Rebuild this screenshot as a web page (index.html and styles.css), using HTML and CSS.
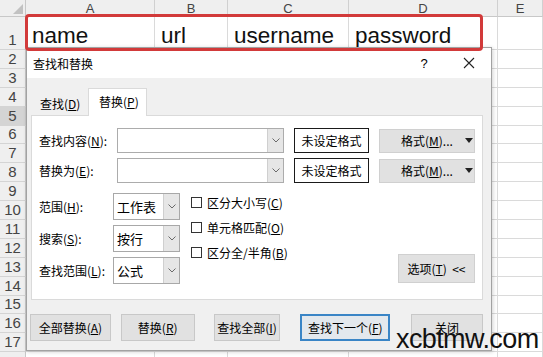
FILE: index.html
```html
<!DOCTYPE html>
<html>
<head>
<meta charset="utf-8">
<title>查找和替换</title>
<link rel="stylesheet" href="styles.css">
</head>
<body>
<div class="sheet">
  <div class="corner"><span class="tri"></span></div>
  <div class="ch">A</div><div class="ch">B</div><div class="ch">C</div><div class="ch">D</div><div class="ch">E</div>

  <div class="rh">1</div><div class="c big">name</div><div class="c big">url</div><div class="c big">username</div><div class="c big">password</div><div class="c"></div>
  <div class="rh">2</div><div class="c"></div><div class="c"></div><div class="c"></div><div class="c"></div><div class="c"></div>
  <div class="rh">3</div><div class="c"></div><div class="c"></div><div class="c"></div><div class="c"></div><div class="c"></div>
  <div class="rh">4</div><div class="c"></div><div class="c"></div><div class="c"></div><div class="c"></div><div class="c"></div>
  <div class="rh active">5</div><div class="c"></div><div class="c"></div><div class="c"></div><div class="c"></div><div class="c"></div>
  <div class="rh">6</div><div class="c"></div><div class="c"></div><div class="c"></div><div class="c"></div><div class="c"></div>
  <div class="rh">7</div><div class="c"></div><div class="c"></div><div class="c"></div><div class="c"></div><div class="c"></div>
  <div class="rh">8</div><div class="c"></div><div class="c"></div><div class="c"></div><div class="c"></div><div class="c"></div>
  <div class="rh">9</div><div class="c"></div><div class="c"></div><div class="c"></div><div class="c"></div><div class="c"></div>
  <div class="rh">10</div><div class="c"></div><div class="c"></div><div class="c"></div><div class="c"></div><div class="c"></div>
  <div class="rh">11</div><div class="c"></div><div class="c"></div><div class="c"></div><div class="c"></div><div class="c"></div>
  <div class="rh">12</div><div class="c"></div><div class="c"></div><div class="c"></div><div class="c"></div><div class="c"></div>
  <div class="rh">13</div><div class="c"></div><div class="c"></div><div class="c"></div><div class="c"></div><div class="c"></div>
  <div class="rh">14</div><div class="c"></div><div class="c"></div><div class="c"></div><div class="c"></div><div class="c"></div>
  <div class="rh">15</div><div class="c"></div><div class="c"></div><div class="c"></div><div class="c"></div><div class="c"></div>
  <div class="rh">16</div><div class="c"></div><div class="c"></div><div class="c"></div><div class="c"></div><div class="c"></div>
  <div class="rh">17</div><div class="c"></div><div class="c"></div><div class="c"></div><div class="c"></div><div class="c"></div>
  <div class="rh"></div><div class="c"></div><div class="c"></div><div class="c"></div><div class="c"></div><div class="c"></div>
</div>

<div class="highlight"></div>

<div class="dialog">
  <div class="titlebar">
    <span class="title">查找和替换</span>
    <span class="help">?</span>
    <span class="close"><svg width="12" height="12" viewBox="0 0 12 12"><path d="M1 1 L11 11 M11 1 L1 11" stroke="#222" stroke-width="1.1" fill="none"/></svg></span>
  </div>
  <div class="dbody">
    <div class="tabs">
      <div class="tab">查找(<u>D</u>)</div>
      <div class="tab current">替换(<u>P</u>)</div>
    </div>
    <div class="panel">
      <div class="frow">
        <span class="flabel">查找内容(<u>N</u>):</span>
        <div class="combo"><span class="combo-field"></span><span class="dd"><svg width="8" height="5" viewBox="0 0 8 5"><path d="M0.5 0.5 L4 4 L7.5 0.5" fill="none" stroke="#6a6a6a"/></svg></span></div>
        <div class="fmtbox">未设定格式</div>
        <div class="fmtbtn"><span>格式(<u>M</u>)...</span><svg class="caret" width="8" height="5" viewBox="0 0 8 5"><path d="M0 0 H8 L4 5 Z" fill="#222"/></svg></div>
      </div>
      <div class="frow">
        <span class="flabel">替换为(<u>E</u>):</span>
        <div class="combo"><span class="combo-field"></span><span class="dd"><svg width="8" height="5" viewBox="0 0 8 5"><path d="M0.5 0.5 L4 4 L7.5 0.5" fill="none" stroke="#6a6a6a"/></svg></span></div>
        <div class="fmtbox">未设定格式</div>
        <div class="fmtbtn"><span>格式(<u>M</u>)...</span><svg class="caret" width="8" height="5" viewBox="0 0 8 5"><path d="M0 0 H8 L4 5 Z" fill="#222"/></svg></div>
      </div>
      <div class="opts">
        <div class="selcol">
          <div class="srow">
            <span class="slabel">范围(<u>H</u>):</span>
            <div class="sel"><span class="sel-val">工作表</span><span class="dd"><svg width="8" height="5" viewBox="0 0 8 5"><path d="M0.5 0.5 L4 4 L7.5 0.5" fill="none" stroke="#6a6a6a"/></svg></span></div>
          </div>
          <div class="srow">
            <span class="slabel">搜索(<u>S</u>):</span>
            <div class="sel"><span class="sel-val">按行</span><span class="dd"><svg width="8" height="5" viewBox="0 0 8 5"><path d="M0.5 0.5 L4 4 L7.5 0.5" fill="none" stroke="#6a6a6a"/></svg></span></div>
          </div>
          <div class="srow">
            <span class="slabel">查找范围(<u>L</u>):</span>
            <div class="sel"><span class="sel-val">公式</span><span class="dd"><svg width="8" height="5" viewBox="0 0 8 5"><path d="M0.5 0.5 L4 4 L7.5 0.5" fill="none" stroke="#6a6a6a"/></svg></span></div>
          </div>
        </div>
        <div class="checks">
          <div class="chk"><span class="box"></span>区分大小写(<u>C</u>)</div>
          <div class="chk"><span class="box"></span>单元格匹配(<u>O</u>)</div>
          <div class="chk"><span class="box"></span>区分全/半角(<u>B</u>)</div>
        </div>
        <div class="optbtn">选项(<u>T</u>)&nbsp;&nbsp;&lt;&lt;</div>
      </div>
    </div>
    <div class="btnrow">
      <div class="btn b1">全部替换(<u>A</u>)</div>
      <div class="btn b2">替换(<u>R</u>)</div>
      <div class="btn b3">查找全部(<u>I</u>)</div>
      <div class="btn b4 primary">查找下一个(<u>F</u>)</div>
      <div class="btn b5">关闭</div>
    </div>
  </div>
</div>

<div class="watermark">xcbtmw.com</div>
</body>
</html>
```

FILE: styles.css
```css
* { box-sizing: border-box; }
html, body { margin: 0; padding: 0; }
body {
  width: 543px;
  height: 357px;
  overflow: hidden;
  position: relative;
  background: #fff;
  font-family: "Liberation Sans", Arial, sans-serif;
}

/* spreadsheet */
.sheet {
  display: grid;
  grid-template-columns: 26px 129px 73px 121px 149px 45px;
  grid-template-rows: 17px 33px repeat(17, 18.9px);
}
.corner {
  background: #efefef;
  border-right: 1px solid #c8c8c8;
  border-bottom: 1px solid #c8c8c8;
  display: flex;
  align-items: flex-end;
  justify-content: flex-end;
  padding: 0 2px 2px 0;
}
.tri {
  width: 0;
  height: 0;
  border-left: 10px solid transparent;
  border-bottom: 10px solid #c2c2c2;
}
.ch {
  background: #efefef;
  border-right: 1px solid #d0d0d0;
  border-bottom: 1px solid #c8c8c8;
  text-align: center;
  font-size: 13px;
  line-height: 17px;
  color: #444;
}
.rh {
  background: #efefef;
  border-right: 1px solid #c8c8c8;
  border-bottom: 1px solid #d4d4d4;
  font-size: 15px;
  line-height: 18px;
  color: #444;
  display: flex;
  align-items: flex-end;
  justify-content: center;
}
.rh.active { background: #d4d4d4; }
.c {
  border-right: 1px solid #dadada;
  border-bottom: 1px solid #dadada;
}
.c.big {
  font-size: 22.5px;
  color: #111;
  display: flex;
  align-items: flex-end;
  padding-left: 6px;
}

/* red highlight */
.highlight {
  position: absolute;
  left: 25px;
  top: 14px;
  width: 458px;
  height: 37px;
  border: 3px solid #d23a3a;
  border-radius: 4px;
  z-index: 3;
}

/* dialog */
.dialog {
  position: absolute;
  left: 26px;
  top: 47px;
  width: 466px;
  height: 304px;
  background: #f0f0f0;
  border: 1px solid #a2a2a2;
  box-shadow: 1px 1px 4px rgba(0,0,0,0.18);
  font-family: "Noto Sans CJK SC", "Liberation Sans", sans-serif;
  font-size: 12px;
  color: #000;
  display: flex;
  flex-direction: column;
  z-index: 2;
}
u { text-underline-offset: 1px; }
.titlebar {
  height: 30px;
  background: #fff;
  display: flex;
  align-items: center;
  padding-left: 6px;
}
.title { flex: 1; }
.help {
  width: 20px;
  text-align: center;
  margin-right: 13px;
  font-family: "Liberation Sans", sans-serif;
  font-size: 13px;
}
.close {
  width: 44px;
  display: flex;
  justify-content: center;
  align-items: center;
}
.dbody {
  flex: 1;
  padding: 10px 8px 0 4px;
  display: flex;
  flex-direction: column;
}
.tabs {
  display: flex;
  align-items: flex-end;
  height: 27px;
}
.tab {
  width: 57px;
  height: 24px;
  padding-left: 9px;
  display: flex;
  align-items: center;
}
.tab.current {
  width: 59px;
  height: 28px;
  padding-left: 10px;
  padding-bottom: 2px;
  background: #fff;
  border: 1px solid #dadada;
  border-bottom: none;
  margin-bottom: -1px;
  position: relative;
  z-index: 1;
}
.panel {
  height: 185px;
  background: #fff;
  border: 1px solid #dadada;
  padding: 12px 7px 0 7px;
}
.frow {
  display: flex;
  align-items: center;
  height: 25px;
  margin-bottom: 5px;
}
.flabel { width: 78px; }
.combo {
  width: 167px;
  height: 25px;
  border: 1px solid #acacac;
  display: flex;
  background: #fff;
}
.combo-field { flex: 1; }
.dd {
  width: 16px;
  background: #e6e6e6;
  border-left: 1px solid #cfcfcf;
  display: flex;
  align-items: center;
  justify-content: center;
}
.fmtbox {
  margin-left: 10px;
  width: 75px;
  height: 25px;
  border: 1px solid #1a1a1a;
  display: flex;
  align-items: center;
  justify-content: center;
}
.fmtbtn {
  margin-left: 10px;
  width: 96px;
  height: 24px;
  background: #e1e1e1;
  border: 1px solid #d0d0d0;
  display: flex;
  align-items: center;
  padding-left: 21px;
}
.caret { margin-left: 12px; }

.opts {
  display: flex;
  margin-top: 10px;
}
.selcol {
  display: flex;
  flex-direction: column;
  gap: 5px;
}
.srow {
  display: flex;
  align-items: center;
  height: 27px;
}
.slabel { width: 74px; }
.sel {
  width: 67px;
  height: 27px;
  border: 1px solid #a8a8a8;
  display: flex;
  background: #fff;
}
.sel-val {
  flex: 1;
  padding-left: 3px;
  display: flex;
  align-items: center;
  font-size: 13px;
}
.checks {
  margin-left: 11px;
  margin-top: -3px;
  display: flex;
  flex-direction: column;
}
.chk {
  height: 25px;
  display: flex;
  align-items: center;
}
.box {
  width: 11px;
  height: 11px;
  border: 1px solid #333;
  background: #fff;
  margin-right: 5px;
}
.optbtn {
  margin-left: auto;
  align-self: flex-end;
  margin-bottom: 1px;
  width: 77px;
  height: 29px;
  background: #e1e1e1;
  border: 1px solid #d0d0d0;
  display: flex;
  align-items: center;
  justify-content: center;
}

.btnrow {
  display: flex;
  margin-top: 14px;
  margin-left: -1px;
}
.btn {
  height: 27px;
  background: #e1e1e1;
  border: 1px solid #c8c8c8;
  display: flex;
  align-items: center;
  justify-content: center;
}
.b1 { width: 81px; }
.b2 { width: 74px; margin-left: 10px; }
.b3 { width: 67px; margin-left: 19px; }
.b4 { width: 90px; margin-left: 20px; }
.b5 { width: 72px; margin-left: 21px; }
.btn.primary {
  border: 2px solid #3a85c6;
  background: #e3e8ed;
}

/* watermark */
.watermark {
  position: absolute;
  left: 396px;
  top: 326px;
  font-family: "Liberation Sans", Arial, sans-serif;
  font-size: 27px;
  line-height: 27px;
  letter-spacing: -0.6px;
  color: #111;
  z-index: 4;
}
```
